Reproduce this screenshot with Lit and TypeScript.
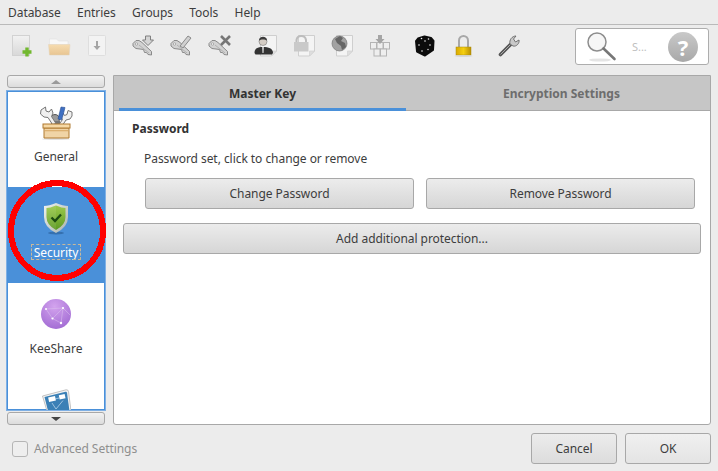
import { LitElement, html, css, svg } from "lit";
import { customElement } from "lit/decorators.js";

const keyBase = svg`<path d="M1 10.500 L4 7.500 L7 7.500 L10 9.500 L19.500 18.500 L19.500 22 L16 21.500 L14.500 19.500 L12.500 19.500 L11.500 16.500 L8 16 L4 15.500 L1 13Z" fill="#d2d2d2" stroke="#8a8a8a" stroke-width="1" stroke-linejoin="round"/><circle cx="4.500" cy="11" r="1.200" fill="#f4f4f4" stroke="#8a8a8a" stroke-width=".6"/><path d="M7 12 L17 20" stroke="#a8a8a8" stroke-width=".8"/>`;

const doc = svg`<path d="M6.500 2.500h16v15.500l-5 5h-11z" fill="#f4f4f4" stroke="#cfcfcf"/><path d="M22.500 18l-5 0v5z" fill="#dedede" stroke="#cfcfcf" stroke-width=".6"/>`;

const ICONS: Record<string, unknown> = {
  add: svg`<svg width="24" height="24" viewBox="0 0 24 24"><defs><linearGradient id="pg" x1="0" y1="0" x2="0" y2="1"><stop offset="0" stop-color="#f2f2f2"/><stop offset="1" stop-color="#d8d8d8"/></linearGradient></defs><rect x="2.500" y="2.500" width="17" height="20" fill="url(#pg)" stroke="#d2d2d2"/><path d="M17 14.500v9M12.500 19h9" stroke="#72b82f" stroke-width="3.400" fill="none"/></svg>`,
  folder: svg`<svg width="24" height="24" viewBox="0 0 24 24"><defs><linearGradient id="fg" x1="0" y1="0" x2="0" y2="1"><stop offset="0" stop-color="#f6dcb0"/><stop offset="1" stop-color="#e8c592"/></linearGradient></defs><path d="M1.500 6h7l2 2h9.500v4H1.500z" fill="#f8f8f8" stroke="#e0e0e0" stroke-width=".6"/><path d="M.5 11.500h21.500l-.8 10.500H1.500z" fill="url(#fg)" stroke="#e2d2ba" stroke-width=".5"/></svg>`,
  save: svg`<svg width="24" height="24" viewBox="0 0 24 24"><rect x="2.500" y="2.500" width="17" height="20" rx="1" fill="#f3f3f3" stroke="#dedede"/><path d="M10 8h2v5h2.500L11 17l-3.500-4H10z" fill="#a5a5a5"/></svg>`,
  keyAdd: svg`<svg width="24" height="24" viewBox="0 0 24 24">${keyBase}<path d="M13.500 3h5v4h3L16 12.500 10.500 7h3z" fill="#d4d4d4" stroke="#808080"/></svg>`,
  keyEdit: svg`<svg width="24" height="24" viewBox="0 0 24 24">${keyBase}<path d="M10 13 L18 3 L21 5 L13 15Z" fill="#d0d0d0" stroke="#8a8a8a"/></svg>`,
  keyDel: svg`<svg width="24" height="24" viewBox="0 0 24 24">${keyBase}<path d="M13 3l9 9M22 3l-9 9" stroke="#777" stroke-width="2.600"/></svg>`,
  user: svg`<svg width="24" height="24" viewBox="0 0 24 24">${doc}<circle cx="9" cy="8.500" r="4" fill="#d4ccc4" stroke="#777" stroke-width=".6"/><path d="M5 7.500c0-5 8-5 8 0-2-1.500-6-1.500-8 0z" fill="#3c3c3c"/><path d="M0.500 20c0-4.500 3-6 8.500-6s10 1.500 10 6l-1 1.500H1.500z" fill="#333"/><path d="M8 14h2l-.4 6h-1.200z" fill="#c4c4c4"/></svg>`,
  lockDoc: svg`<svg width="24" height="24" viewBox="0 0 24 24">${doc}<path d="M4.500 10V7a4.800 4.800 0 0 1 9.500 0v3" fill="none" stroke="#bdbdbd" stroke-width="2"/><rect x="2" y="9" width="14.500" height="9.500" fill="#c9c9c9"/></svg>`,
  globe: svg`<svg width="24" height="24" viewBox="0 0 24 24">${doc}<circle cx="9.500" cy="10.500" r="7.500" fill="#a2a2a2" stroke="#777" stroke-width=".7"/><path d="M5 6l5-3 3 2-2 3 4 2 1 4-4 3-1-4-4-3z" fill="#666"/></svg>`,
  keys: svg`<svg width="24" height="24" viewBox="0 0 24 24"><g fill="#eee" stroke="#b4b4b4"><rect x="2.500" y="9.500" width="6" height="6.500"/><rect x="9" y="9.500" width="6" height="6.500"/><rect x="15.500" y="9.500" width="6" height="6.500"/><rect x="6" y="16" width="6" height="7"/><rect x="12.500" y="16" width="6" height="7"/></g><path d="M10 2h4v4h2.500L12 11 7.500 6H10z" fill="#a5a5a5"/></svg>`,
  dice: svg`<svg width="24" height="24" viewBox="0 0 24 24"><path d="M10.500 3.500 L17 5 L19.500 8 L19 17 L11 22.500 L3 18.500 L2 8 L4 5.500Z" fill="#0c0c0c" stroke="#0c0c0c" stroke-width="2" stroke-linejoin="round"/><g fill="#eee"><circle cx="7.500" cy="5.500" r=".8"/><circle cx="14.500" cy="6" r=".8"/><circle cx="11" cy="8" r=".8"/><circle cx="5" cy="12" r=".8"/><circle cx="8" cy="18" r=".8"/><circle cx="16" cy="12" r=".8"/><circle cx="14" cy="16.500" r=".7"/></g></svg>`,
  padlock: svg`<svg width="24" height="24" viewBox="0 0 24 24"><defs><linearGradient id="lg" x1="0" y1="0" x2="1" y2="0"><stop offset="0" stop-color="#d9a900"/><stop offset=".5" stop-color="#f5cf10"/><stop offset="1" stop-color="#b98f00"/></linearGradient></defs><path d="M7 14.500V7.500a4.500 4.500 0 0 1 9 0v7" fill="none" stroke="#a8a8a8" stroke-width="2"/><rect x="4" y="14" width="15" height="8" fill="url(#lg)" stroke="#a88b10" stroke-width=".5"/><ellipse cx="11.500" cy="23" rx="9" ry=".8" fill="#d0d0d0"/></svg>`,
  wrench: svg`<svg width="24" height="24" viewBox="0 0 24 24"><path d="M2.500 21.500 L13 11" stroke="#555" stroke-width="3.600" stroke-linecap="round"/><path d="M2.500 21.500 L13 11" stroke="#aaa" stroke-width="1"/><path d="M12 11c-1-4 2-8 6-8l-2.500 3 2 3 3.500-2c.8 3-2.500 7-6 6z" fill="#c8c8c8" stroke="#666" stroke-width=".9"/></svg>`,
};

const general = svg`<svg width="34" height="34" viewBox="0 0 34 34"><ellipse cx="17" cy="33" rx="14" ry="1" fill="#e2e2e2"/><circle cx="16" cy="13" r="4.500" fill="#9a9a9a" stroke="#555"/><path d="M12 15h9v4h-9z" fill="#777"/><g fill="#f0f0f0" stroke="#777" stroke-width="1"><path d="M2 4 L6.500 1 L7 5 L10 6 L12.500 3 L14 7 L12.500 10.500 L17 17.500 L13.500 18.500 L9 11.500 L5 11 L1.500 8Z"/><path d="M33 6 L29 4.500 L28 8.500 L25.500 9.500 L24 7 L22 11 L23.500 13.500 L20 18.500 L24 18.500 L27 14 L31 13 L33 10Z"/></g><path d="M19 13 L22 1 L26 1.500 L24.500 7.500 L22.500 14Z" fill="#3e6fc2" stroke="#2a4f90" stroke-width=".6"/><path d="M5 22h25v10H5z" fill="#f0d4a6" stroke="#b07a30"/><rect x="6" y="24" width="23" height="1.300" fill="#dcb070"/><rect x="4" y="18" width="27" height="4" fill="#f6d9a6" stroke="#b07a30"/></svg>`;

const shield = svg`<svg width="28" height="34" viewBox="0 0 28 34"><defs><linearGradient id="sg" x1="0" y1="0" x2="0" y2="1"><stop offset="0" stop-color="#9cc94a"/><stop offset="1" stop-color="#5d9a24"/></linearGradient><linearGradient id="sb" x1="0" y1="0" x2="1" y2="1"><stop offset="0" stop-color="#f0f3ee"/><stop offset="1" stop-color="#a9b2ad"/></linearGradient></defs><ellipse cx="14" cy="31" rx="8" ry="1.500" fill="#1f4f86" opacity=".5"/><path d="M14 1 Q7 4 2 4 V15 Q2 25 14 31 Q26 25 26 15 V4 Q21 4 14 1Z" fill="url(#sb)"/><path d="M14 3.500 Q8 6 4.500 6 V15 Q4.500 23 14 28 Q23.500 23 23.500 15 V6 Q20 6 14 3.500Z" fill="url(#sg)"/><path d="M14 3.500 V28 Q4.500 23 4.500 15 V6 Q8 6 14 3.500Z" fill="#fff" opacity=".08"/><path d="M9.500 15.500l3.500 3.500 6-6.500" fill="none" stroke="#1c4a10" stroke-width="2.300"/></svg>`;

const keeshare = svg`<svg width="32" height="32" viewBox="0 0 32 32"><defs><radialGradient id="kg" cx=".45" cy=".25" r=".9"><stop offset="0" stop-color="#d3a3ee"/><stop offset="1" stop-color="#9a63cf"/></radialGradient></defs><circle cx="16" cy="15" r="15" fill="url(#kg)"/><g stroke="#dcc3ef" stroke-width=".5" fill="none"><path d="M6 10 L23 9 L12.500 19.500 Z M23 9 L21 24 L12.500 19.500 M23 9 L30 16"/></g><g fill="#fff"><circle cx="6" cy="10" r="1"/><circle cx="23" cy="9" r="1.100"/><circle cx="12.500" cy="19.500" r="1.100"/><circle cx="21" cy="24" r="1.200"/></g></svg>`;

const browser = svg`<svg width="30" height="22" viewBox="0 0 30 22"><path d="M1.500 7 L25 0.800 Q27 0.300 27.500 2.500 L30 22 H6 Z" fill="#f4f4f4" stroke="#b4b4b4" stroke-width=".8" stroke-linejoin="round"/><path d="M3.500 8 L24.500 2.800 Q25.800 2.500 26 3.800 L28.500 22 H7 Z" fill="#3b80b6"/><g fill="#fff"><rect x="7.500" y="8" width="7" height="4.500" transform="rotate(-12 10 10)"/><rect x="18" y="5.500" width="6" height="4.500" transform="rotate(-12 21 7)"/></g><path d="M14 10 L18 9 M11 14 L15 20 L22 11.500" stroke="#c9def0" stroke-width=".7" fill="none"/></svg>`;

@customElement("app-root")
export class AppRoot extends LitElement {
  static styles = css`
    :host {
      display: flex;
      flex-direction: column;
      width: 718px;
      height: 471px;
      overflow: hidden;
      position: relative;
      background: #ececec;
      color: #333;
      font-family: "Noto Sans", sans-serif;
      font-size: 12px;
      line-height: 16px;
      letter-spacing: -0.05px;
    }
    .menubar {
      display: flex;
      height: 25px;
      flex: none;
      box-sizing: border-box;
      border-bottom: 1px solid #bababa;
      padding: 5px 0 0 8px;
      gap: 16.300px;
      color: #3d3d3d;
    }
    .toolbar {
      display: flex;
      height: 41px;
      flex: none;
      box-sizing: border-box;
      padding-top: 3px;
      padding-left: 10px;
    }
    .tool {
      width: 24px;
      height: 24px;
      flex: none;
      margin-top: 5px;
      margin-right: 14px;
    }
    .tool.sep {
      margin-right: 22px;
    }
    .search {
      flex: none;
      width: 134px;
      height: 37px;
      box-sizing: border-box;
      margin-left: 39px;
      background: #fff;
      border: 1px solid #adadad;
      border-radius: 3px;
      display: flex;
      align-items: center;
      padding-left: 10px;
    }
    .search-hint {
      margin-left: 14px;
      color: #c0c0c0;
      font-size: 11px;
      flex: 1;
    }
    .help {
      width: 30px;
      height: 30px;
      border-radius: 50%;
      background: linear-gradient(#c9c9c9, #a8a8a8);
      color: #fff;
      font-size: 22px;
      font-weight: 700;
      line-height: 30px;
      text-align: center;
      margin-right: 10px;
      flex: none;
    }
    .main {
      display: flex;
      height: 350px;
      flex: none;
      padding-left: 6px;
      margin-top: 9px;
    }
    .side {
      width: 100px;
      flex: none;
      display: flex;
      flex-direction: column;
      margin-right: 7px;
    }
    .scroll {
      height: 13px;
      flex: none;
      margin: 0 1px;
      box-sizing: border-box;
      border: 1px solid #a8a8a8;
      border-radius: 3px;
      background: linear-gradient(#f2f2f2, #dcdcdc);
      display: flex;
      align-items: center;
      justify-content: center;
    }
    .up {
      border-left: 5px solid transparent;
      border-right: 5px solid transparent;
      border-bottom: 4px solid #9a9a9a;
    }
    .down {
      border-left: 5px solid transparent;
      border-right: 5px solid transparent;
      border-top: 4px solid #444;
    }
    .list {
      height: 321px;
      flex: none;
      box-sizing: border-box;
      margin: 2px 0 1px;
      background: #fff;
      border: 1px solid #7fb0e5;
      box-shadow: inset 0 0 0 1px #4a90d9;
      overflow: hidden;
    }
    .item {
      height: 96px;
      display: flex;
      flex-direction: column;
      align-items: center;
      color: #3d3d3d;
    }
    .item .ic {
      height: 44px;
      margin-top: 10px;
      display: flex;
      align-items: center;
      justify-content: center;
    }
    .item .ic.peek {
      align-items: flex-start;
    }
    .label {
      margin-top: 3px;
      box-sizing: border-box;
      height: 16px;
      padding: 1px 3px 0;
      line-height: 16px;
    }
    .item.sel {
      background: #4a90d9;
      color: #fff;
    }
    .item.sel .label {
      outline: 1px dashed #c8b89a;
      outline-offset: -1px;
    }
    .panel {
      width: 598px;
      height: 350px;
      flex: none;
      box-sizing: border-box;
      background: #fff;
      border: 1px solid #a8a8a8;
      border-radius: 0 0 3px 3px;
    }
    .tabs {
      display: flex;
      height: 35px;
      box-sizing: border-box;
      background: #c6c6c6;
      border-bottom: 1px solid #a8a8a8;
      padding-left: 5px;
    }
    .tab {
      width: 287px;
      height: 34px;
      box-sizing: border-box;
      font-weight: 700;
      letter-spacing: 0;
      text-align: center;
      padding-top: 10px;
      color: #333;
    }
    .tab.active {
      box-shadow: inset 0 -3px 0 #4a90d9;
      height: 35px;
    }
    .tab.off {
      color: #6d6d6d;
      padding-left: 24px;
    }
    .body {
      padding: 10px 9px 0;
    }
    .heading {
      font-weight: 700;
      letter-spacing: 0;
      padding-left: 9px;
      color: #333;
    }
    .hint {
      margin: 14px 0 0 21px;
      color: #3d3d3d;
    }
    .btn {
      box-sizing: border-box;
      height: 31px;
      border: 1px solid #a8a8a8;
      border-radius: 3px;
      background: linear-gradient(#ececec, #d6d6d6);
      color: #3d3d3d;
      font: inherit;
      letter-spacing: inherit;
      padding: 0;
      text-align: center;
    }
    .row {
      display: flex;
      gap: 12px;
      padding-left: 22px;
      margin-top: 11px;
    }
    .row .btn {
      width: 269px;
    }
    .wide {
      display: block;
      width: 578px;
      margin-top: 14px;
    }
    .footer {
      display: flex;
      align-items: center;
      padding-left: 12px;
      margin-top: 8px;
    }
    .check {
      width: 16px;
      height: 16px;
      box-sizing: border-box;
      border: 1px solid #b5b5b5;
      border-radius: 3px;
      background: #eee;
      margin-right: 6px;
    }
    .adv {
      color: #8f8f8f;
      flex: 1;
    }
    .footer .btn {
      width: 86px;
      margin-right: 8px;
      background: linear-gradient(#ececec, #dcdcdc);
    }
    .footer .btn.ok {
      margin-right: 7px;
      background: linear-gradient(#f0f0f0, #e4e4e4);
    }
    .circle {
      position: absolute;
      left: 7px;
      top: 180px;
      pointer-events: none;
    }
  `;

  render() {
    const tools: [string, string][] = [
      ["add", ""], ["folder", ""], ["save", "sep"],
      ["keyAdd", ""], ["keyEdit", ""], ["keyDel", "sep"],
      ["user", ""], ["lockDoc", ""], ["globe", ""], ["keys", "sep"],
      ["dice", ""], ["padlock", "sep"], ["wrench", ""],
    ];
    return html`
      <div class="menubar">
        <span>Database</span><span>Entries</span><span>Groups</span><span>Tools</span><span>Help</span>
      </div>
      <div class="toolbar">
        ${tools.map(([k, c]) => html`<div class="tool ${c}">${ICONS[k]}</div>`)}
        <div class="search">
          <svg width="32" height="32" viewBox="0 0 32 32">
            <ellipse cx="14" cy="29" rx="11" ry="1.600" fill="#e4e4e4" />
            <circle cx="11" cy="11" r="9" fill="#f6f6f6" stroke="#8d8d8d" stroke-width="1.500" />
            <path d="M17.500 17.500 L28.500 28" stroke="#777" stroke-width="2.600" stroke-linecap="round" />
          </svg>
          <span class="search-hint">S...</span>
          <div class="help">?</div>
        </div>
      </div>
      <div class="main">
        <div class="side">
          <div class="scroll"><div class="up"></div></div>
          <div class="list">
            <div class="item"><div class="ic">${general}</div><div class="label">General</div></div>
            <div class="item sel"><div class="ic">${shield}</div><div class="label">Security</div></div>
            <div class="item"><div class="ic">${keeshare}</div><div class="label">KeeShare</div></div>
            <div class="item"><div class="ic peek">${browser}</div></div>
          </div>
          <div class="scroll"><div class="down"></div></div>
        </div>
        <div class="panel">
          <div class="tabs">
            <div class="tab active">Master Key</div>
            <div class="tab off">Encryption Settings</div>
          </div>
          <div class="body">
            <div class="heading">Password</div>
            <div class="hint">Password set, click to change or remove</div>
            <div class="row">
              <button class="btn">Change Password</button>
              <button class="btn">Remove Password</button>
            </div>
            <button class="btn wide">Add additional protection...</button>
          </div>
        </div>
      </div>
      <div class="footer">
        <div class="check"></div>
        <span class="adv">Advanced Settings</span>
        <button class="btn">Cancel</button>
        <button class="btn ok">OK</button>
      </div>
      <svg class="circle" width="100" height="102" viewBox="0 0 100 102" shape-rendering="crispEdges">
        <ellipse cx="50" cy="50.500" rx="46" ry="47.500" fill="none" stroke="#f00" stroke-width="6" />
      </svg>
    `;
  }
}
